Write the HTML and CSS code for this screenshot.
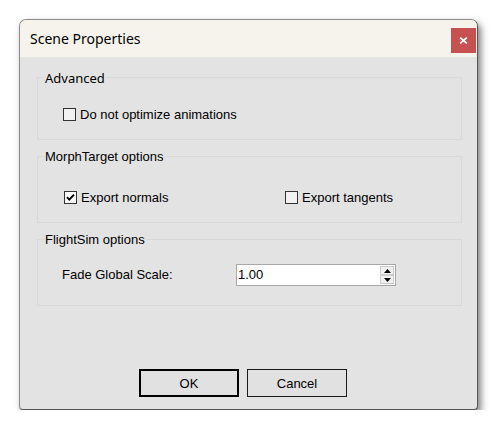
FILE: index.html
```html
<!DOCTYPE html>
<html>
<head>
<meta charset="utf-8">
<title>Scene Properties</title>
<link rel="stylesheet" href="styles.css">
</head>
<body>
<div class="window">
  <div class="titlebar">
    <span class="title">Scene Properties</span>
    <button class="close" aria-label="Close">
      <svg width="25" height="25" viewBox="0 0 25 25"><path d="M9.2 9.6 L15.8 15.4 M15.8 9.6 L9.2 15.4" stroke="#fff" stroke-width="1.8" fill="none"/></svg>
    </button>
  </div>
  <div class="content">
    <div class="group group-short">
      <div class="legend legend-ui">Advanced</div>
      <div class="row row-adv">
        <label class="item"><span class="box"></span>Do not optimize animations</label>
      </div>
    </div>
    <div class="group">
      <div class="legend">MorphTarget options</div>
      <div class="row row-morph">
        <label class="item item-wide"><span class="box box-checked"><svg width="11" height="11" viewBox="0 0 11 11"><path d="M2 5.2 L4.3 7.6 L9 2.6" stroke="#000" stroke-width="1.9" fill="none"/></svg></span>Export normals</label>
        <label class="item"><span class="box"></span>Export tangents</label>
      </div>
    </div>
    <div class="group">
      <div class="legend">FlightSim options</div>
      <div class="row row-flight">
        <span class="field-label">Fade Global Scale:</span>
        <div class="spinbox">
          <span class="spin-value">1.00</span>
          <div class="spin">
            <span class="spin-btn"><svg width="7" height="4" viewBox="0 0 7 4"><path d="M0 4 L3.5 0 L7 4 Z" fill="#000"/></svg></span>
            <span class="spin-btn"><svg width="7" height="4" viewBox="0 0 7 4"><path d="M0 0 L7 0 L3.5 4 Z" fill="#000"/></svg></span>
          </div>
        </div>
      </div>
    </div>
  </div>
  <div class="buttons">
    <button class="btn btn-default">OK</button>
    <button class="btn">Cancel</button>
  </div>
</div>
</body>
</html>
```

FILE: styles.css
```css
body {
  margin: 0;
  background: #ffffff;
  font-family: "Liberation Sans", Arial, sans-serif;
  font-size: 13px;
  color: #000;
}

.window {
  margin: 19px 0 0 19px;
  width: 459px;
  height: 391px;
  box-sizing: border-box;
  border: 1px solid #8c8c8c;
  border-right-color: #555555;
  border-bottom-color: #555555;
  border-radius: 7px 7px 4px 4px;
  background: #e3e3e3;
  box-shadow: 3px 4px 7px rgba(0, 0, 0, 0.5);
  display: flex;
  flex-direction: column;
  overflow: hidden;
}

.titlebar {
  height: 37px;
  flex-shrink: 0;
  background: #f5f3eb;
  display: flex;
  align-items: flex-start;
}

.title {
  font-family: "Noto Sans", sans-serif;
  font-size: 14px;
  line-height: 20px;
  margin: 9px 0 0 10px;
  color: #000;
}

.close {
  margin: 8px 1px 0 auto;
  width: 25px;
  height: 25px;
  padding: 0;
  border: 0;
  background: #c75050;
  display: flex;
}

.content {
  padding: 20px 15px 0 17px;
  display: flex;
  flex-direction: column;
  gap: 16px;
}

.group {
  border: 1px solid #d9d9d9;
  box-sizing: border-box;
  height: 67px;
}

.group-short {
  height: 63px;
}

.legend {
  width: max-content;
  margin: -8px 0 0 6px;
  padding: 0 1px;
  line-height: 16px;
  background: #e3e3e3;
}

.legend-ui {
  font-family: "Noto Sans", sans-serif;
  font-size: 13px;
}

.row {
  display: flex;
  align-items: center;
}

.row-adv {
  height: 13px;
  margin-top: 22px;
  padding-left: 25px;
}

.row-morph {
  height: 13px;
  margin-top: 26px;
  padding-left: 26px;
}

.row-flight {
  height: 22px;
  margin-top: 16px;
  padding-left: 24px;
}

.item {
  display: flex;
  align-items: center;
  line-height: 15px;
}

.item-wide {
  width: 221px;
}

.box {
  width: 13px;
  height: 13px;
  box-sizing: border-box;
  border: 1px solid #333;
  background: #f2f2f2;
  margin-right: 4px;
  display: flex;
  align-items: center;
  justify-content: center;
  flex-shrink: 0;
}

.box-checked {
  background: #fafafa;
}

.field-label {
  width: 174px;
  line-height: 22px;
}

.spinbox {
  width: 160px;
  height: 22px;
  box-sizing: border-box;
  border: 1px solid #a8a8a8;
  background: #fff;
  display: flex;
  align-items: center;
}

.spin-value {
  flex: 1;
  padding-left: 1px;
  line-height: 20px;
}

.spin {
  width: 14px;
  margin-right: 1px;
  display: flex;
  flex-direction: column;
}

.spin-btn {
  height: 9px;
  box-sizing: border-box;
  border: 1px solid #cdcdcd;
  background: #f0f0f0;
  display: flex;
  align-items: center;
  justify-content: center;
}

.buttons {
  margin-top: 63px;
  padding-left: 119px;
  display: flex;
  gap: 8px;
}

.btn {
  width: 100px;
  height: 28px;
  box-sizing: border-box;
  padding: 0;
  border: 1px solid #1a1a1a;
  background: #e1e1e1;
  font-family: "Liberation Sans", Arial, sans-serif;
  font-size: 13px;
  color: #000;
}

.btn-default {
  border: 2px solid #000;
}
```
